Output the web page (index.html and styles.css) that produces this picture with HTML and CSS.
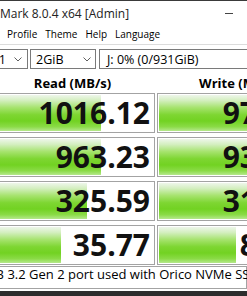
FILE: index.html
```html
<!DOCTYPE html>
<html lang="en">
<head>
  <meta charset="UTF-8" />
  <title>CrystalDiskMark 8.0.4 x64 [Admin]</title>
  <link rel="stylesheet" href="styles.css">
</head>
<body>
<div class="window">
  <div class="titlebar">
    <span class="title">CrystalDiskMark 8.0.4 x64 [Admin]</span>
    <span class="min"></span>
  </div>

  <div class="menu">
    <span>Settings</span>
    <span>Profile</span>
    <span>Theme</span>
    <span>Help</span>
    <span>Language</span>
  </div>

  <div class="toolbar">
    <div class="combo combo-count">
      <span>1</span>
      <svg class="chev" width="8" height="5" viewBox="0 0 8 5"><polyline points="0.5,0.5 4,4 7.5,0.5" /></svg>
    </div>
    <div class="combo combo-size">
      <span>2GiB</span>
      <svg class="chev" width="8" height="5" viewBox="0 0 8 5"><polyline points="0.5,0.5 4,4 7.5,0.5" /></svg>
    </div>
    <div class="combo combo-drive">
      <span>J: 0% (0/931GiB)</span>
    </div>
  </div>

  <div class="heads">
    <div class="head">Read (MB/s)</div>
    <div class="head">Write (MB/s)</div>
  </div>

  <div class="results">
    <div class="cell"><div class="bar" style="width:67%"></div><span class="val">1016.12</span></div>
    <div class="cell"><div class="bar" style="width:72%"></div><span class="val">976.38</span></div>

    <div class="cell"><div class="bar" style="width:67%"></div><span class="val">963.23</span></div>
    <div class="cell"><div class="bar" style="width:71%"></div><span class="val">937.52</span></div>

    <div class="cell"><div class="bar" style="width:58.5%"></div><span class="val">325.59</span></div>
    <div class="cell"><div class="bar" style="width:60%"></div><span class="val">316.84</span></div>

    <div class="cell"><div class="bar" style="width:42.5%"></div><span class="val">35.77</span></div>
    <div class="cell"><div class="bar" style="width:47%"></div><span class="val">85.21</span></div>
  </div>

  <div class="status">USB 3.2 Gen 2 port used with Orico NVMe SSD</div>
</div>
</body>
</html>
```

FILE: styles.css
```css
body {
  margin: 0;
  width: 247px;
  height: 296px;
  overflow: hidden;
  background: #fff;
  font-family: 'Open Sans', 'Noto Sans', sans-serif;
  color: #000;
}

/* Окно */
.window {
  height: 296px;
  box-sizing: border-box;
  border-top: 1px solid #3a3a3a;
  border-bottom: 5px solid #2d2d2d;
  display: flex;
  flex-direction: column;
  overflow: hidden;
}

.titlebar {
  height: 23px;
  flex: none;
  display: flex;
  align-items: center;
  justify-content: space-between;
  padding: 2px 14px 0 0;
  box-sizing: border-box;
  font-size: 12px;
  white-space: nowrap;
}
.title {
  margin-left: -62px;
  color: #222;
}
.min {
  width: 8px;
  height: 1px;
  background: #444;
  margin-top: -1px;
}

.menu {
  height: 21px;
  flex: none;
  box-sizing: border-box;
  border-bottom: 1px solid #dcdcdc;
  display: flex;
  align-items: center;
  gap: 8px;
  margin-left: -38px;
  font-size: 10px;
  white-space: nowrap;
}

/* Комбо */
.toolbar {
  height: 20px;
  flex: none;
  margin-top: 4px;
  display: flex;
  white-space: nowrap;
}
.combo {
  flex: none;
  height: 20px;
  box-sizing: border-box;
  border: 1px solid #7a7a7a;
  display: flex;
  align-items: center;
  font-size: 12.5px;
}
.combo-count {
  width: 48px;
  margin-left: -20px;
  justify-content: flex-end;
  gap: 8px;
  padding-right: 5px;
}
.combo-size {
  width: 66px;
  margin-left: 2px;
  justify-content: space-between;
  padding: 0 4px 0 5px;
}
.combo-drive {
  width: 180px;
  margin-left: 3px;
  padding-left: 7px;
}
.chev polyline {
  fill: none;
  stroke: #606060;
  stroke-width: 1;
}

/* Заглавия */
.heads {
  height: 24px;
  flex: none;
  display: grid;
  grid-template-columns: 165px 165px;
  column-gap: 2px;
  margin-left: -10px;
}
.head {
  padding-top: 6px;
  text-align: center;
  font-size: 13px;
  line-height: 16px;
  font-weight: 700;
  white-space: nowrap;
}

/* Резултати */
.results {
  flex: none;
  display: grid;
  grid-template-columns: 165px 165px;
  grid-auto-rows: 40px;
  column-gap: 2px;
  row-gap: 4px;
  margin-left: -10px;
}
.cell {
  position: relative;
  box-sizing: border-box;
  border: 1px solid #a3a3a3;
  background: #fff;
  display: flex;
  align-items: center;
  justify-content: flex-end;
  padding-right: 4px;
}
.bar {
  position: absolute;
  top: 1px;
  bottom: 1px;
  left: 1px;
  background: linear-gradient(to bottom, #eef6ea 0%, #d4efc0 15%, #a6e36e 35%, #7ed632 55%, #72d222 72%, #8adb46 88%, #b5e88c 100%);
}
.val {
  position: relative;
  font-size: 30px;
  line-height: 1;
  font-weight: 700;
  color: #111;
  white-space: nowrap;
}

.status {
  height: 23px;
  flex: none;
  margin-top: 1px;
  margin-left: -21px;
  box-sizing: border-box;
  border: 1px solid #a3a3a3;
  border-left: none;
  font-size: 13px;
  line-height: 15px;
  white-space: nowrap;
}
```
